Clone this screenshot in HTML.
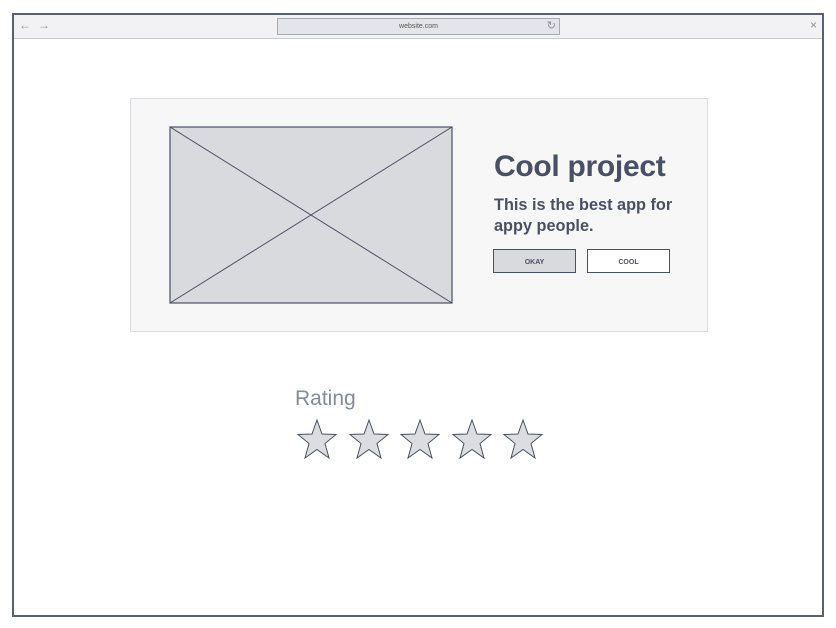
<!DOCTYPE html>
<html><head><style>
body{margin:0;width:836px;height:628px;background:#fff;position:relative;overflow:hidden;font-family:"Liberation Sans",sans-serif}
.frame{position:absolute;left:12px;top:13px;width:808px;height:600px;border:2px solid #5a6072}
.bar{position:absolute;left:0;top:0;right:0;height:23px;background:#f2f2f4;border-bottom:1px solid #c8cad0}
.url{position:absolute;left:263px;top:3px;width:281px;height:15px;background:#e4e5e8;border:1px solid #a8abb3;font-size:7px;color:#555;text-align:center;line-height:15px}
.card{position:absolute;left:130px;top:98px;width:576px;height:232px;background:#f7f7f8;border:1px solid #dcdde0}
h1{position:absolute;left:494px;top:150px;margin:0;font-size:30px;color:#4a5064;font-weight:bold;letter-spacing:-0.3px}
.sub{position:absolute;left:494px;top:195px;width:200px;font-size:16.3px;line-height:21px;font-weight:bold;color:#4a5064}
.btn{position:absolute;top:249px;height:22px;width:81px;border:1.5px solid #4a5064;font-size:7px;font-weight:bold;color:#4a5064;text-align:center;line-height:26px}
.rating{position:absolute;left:295px;top:387px;font-size:21px;color:#868b98}
</style></head><body>
<div class="frame">
<div class="bar">
<span style="position:absolute;left:5px;top:3px;font-size:12px;color:#8a8f9c">&#8592;</span>
<span style="position:absolute;left:24px;top:3px;font-size:12px;color:#8a8f9c">&#8594;</span>
<div class="url">website.com<span style="position:absolute;right:3px;top:0;font-size:11px;color:#8a8f9c">&#8635;</span></div>
<span style="position:absolute;right:5px;top:3px;font-size:12px;color:#8a8f9c">&#215;</span>
</div></div>
<div class="card"></div>
<svg style="position:absolute;left:169px;top:126px" width="285" height="179">
<rect x="1" y="1" width="282" height="176" fill="#d9dadd" stroke="#4a5064" stroke-width="1.2"/>
<line x1="1" y1="1" x2="283" y2="177" stroke="#4a5064" stroke-width="1"/>
<line x1="283" y1="1" x2="1" y2="177" stroke="#4a5064" stroke-width="1"/>
</svg>
<h1>Cool project</h1>
<div class="sub">This is the best app for appy people.</div>
<div class="btn" style="left:493px;background:#d9dadd">OKAY</div>
<div class="btn" style="left:587px;background:#fff">COOL</div>
<div class="rating">Rating</div>
<svg style="position:absolute;left:295px;top:419px" width="255" height="44">
<defs><polygon id="s" points="20,1 25,15 39,15.5 28,24.5 32,39 20,30.5 8,39 12,24.5 1,15.5 15,15" fill="#dcdde0" stroke="#4a5064" stroke-width="1"/></defs>
<use href="#s" x="2"/><use href="#s" x="54"/><use href="#s" x="105"/><use href="#s" x="157"/><use href="#s" x="208"/>
</svg>
</body></html>
